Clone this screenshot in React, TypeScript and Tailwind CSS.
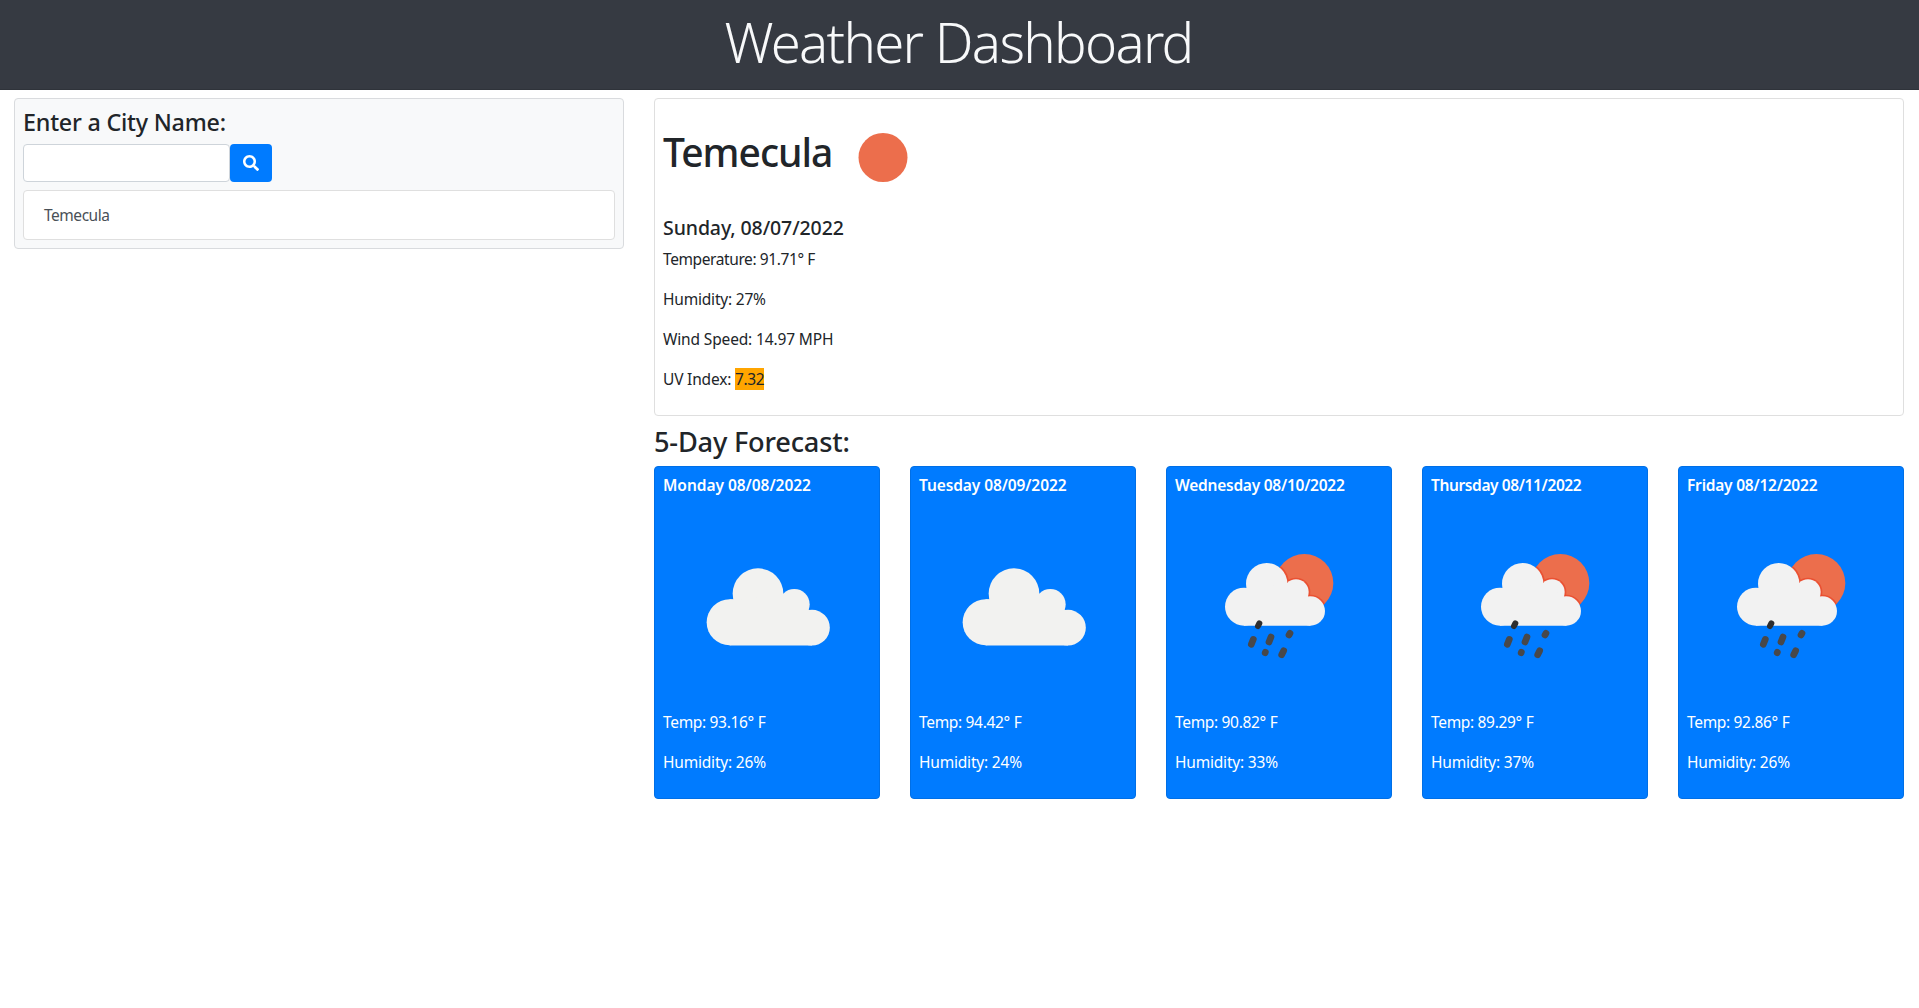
import { FaSearch } from 'react-icons/fa';

function CloudIcon() {
  return (
    <svg viewBox="0 0 208 208" className="block h-[208px] w-full">
      <g transform="translate(-23 -52) scale(0.33333)" fill="#f2f2f0">
        <circle cx="354" cy="431" r="76" />
        <circle cx="269" cy="517" r="69" />
        <circle cx="463" cy="463" r="46" />
        <circle cx="516" cy="533" r="53.5" />
        <path d="M269 448H300L430 432L505 478L516 500V586.5H269Z" />
      </g>
    </svg>
  );
}

function CloudShape() {
  return (
    <>
      <circle cx="335" cy="371" r="62" />
      <circle cx="267" cy="440" r="57" />
      <circle cx="423" cy="396" r="38" />
      <circle cx="466" cy="453" r="44" />
      <path d="M267 385H300L396 372L458 408L466 430V497H267Z" />
    </>
  );
}

function RainIcon({ id }: { id: string }) {
  return (
    <svg viewBox="0 0 208 208" className="block h-[208px] w-full">
      <g transform="translate(-20 -42) scale(0.33333)">
        <clipPath id={id}>
          <circle cx="448" cy="369" r="87" />
        </clipPath>
        <circle cx="448" cy="369" r="87" fill="#ec6e4c" />
        <g clipPath={`url(#${id})`} fill="#ea4a2c" stroke="#ea4a2c" strokeWidth="10" strokeOpacity="0.8">
          <CloudShape />
        </g>
        <g fill="#f2f2f2">
          <CloudShape />
        </g>
        <g stroke="#48484a" strokeWidth="20" strokeLinecap="round">
          <path d="M313 490L309 498" stroke="#2e2e30" strokeWidth="18" />
          <path d="M295 538L289 553" />
          <path d="M348 531L342 546" />
          <path d="M405 520L402 525" />
          <path d="M331 577L330.5 578" />
          <path d="M386 572L380 584" />
        </g>
      </g>
    </svg>
  );
}

const forecast = [
  { day: 'Monday 08/08/2022', tracking: 'tracking-[-0.03px]', temp: '93.16', humidity: 26, rain: false },
  { day: 'Tuesday 08/09/2022', tracking: 'tracking-[-0.1px]', temp: '94.42', humidity: 24, rain: false },
  { day: 'Wednesday 08/10/2022', tracking: 'tracking-[-0.24px]', temp: '90.82', humidity: 33, rain: true },
  { day: 'Thursday 08/11/2022', tracking: 'tracking-[-0.38px]', temp: '89.29', humidity: 37, rain: true },
  { day: 'Friday 08/12/2022', tracking: 'tracking-[-0.22px]', temp: '92.86', humidity: 26, rain: true },
];

export default function App() {
  return (
    <div className="min-h-screen bg-white font-['Noto_Sans','Open_Sans',sans-serif] text-[15.5px] leading-[24px] text-[#212529]">
      <header className="flex h-[90px] justify-center border-b border-[#2f333a] bg-[#363a42] pt-[9px] pr-[2px]">
        <h1 className="text-[54.5px] leading-[67px] font-light tracking-[-1.7px] text-[#f8f9fa]">Weather Dashboard</h1>
      </header>

      <main className="flex items-start gap-[30px] pt-2 pr-[15px] pl-[14px]">
        <aside className="w-[610px] shrink-0 rounded border border-[#d9dbde] bg-[#f8f9fa] p-2">
          <h3 className="mb-[7px] pt-px text-[23.3px] leading-[29px] font-medium tracking-[-0.22px]">Enter a City Name:</h3>
          <form className="flex" onSubmit={(e) => e.preventDefault()}>
            <input className="h-[38px] w-[207px] rounded border border-[#ced4da] bg-white px-3 outline-none" aria-label="City name" />
            <button className="flex h-[38px] w-[42px] items-center justify-center rounded bg-[#007bff] text-base text-white" aria-label="Search">
              <FaSearch />
            </button>
          </form>
          <ul className="mt-2">
            <li className="rounded border border-[#dfdfdf] bg-white px-5 py-3 tracking-[-0.47px] text-[#495057]">Temecula</li>
          </ul>
        </aside>

        <div className="min-w-0 flex-1">
          <section className="h-[318px] rounded border border-[#dfdfdf] bg-white p-2">
            <div className="flex h-[100px]">
              <h2 className="pt-[21px] text-[39px] leading-[48px] font-medium tracking-[-1px]">Temecula</h2>
              <svg viewBox="0 0 100 100" className="ml-px h-[100px] w-[100px]">
                <circle cx="50" cy="50.5" r="24.5" fill="#ec6e4c" />
              </svg>
            </div>
            <h4 className="mt-[9px] mb-[7px] text-[19.5px] leading-[24px] font-medium tracking-[-0.1px]">Sunday, 08/07/2022</h4>
            <p className="mb-4 tracking-[-0.4px]">Temperature: 91.71° F</p>
            <p className="mb-4 tracking-[-0.2px]">Humidity: 27%</p>
            <p className="mb-4 tracking-[-0.15px]">Wind Speed: 14.97 MPH</p>
            <p className="mb-4 tracking-[-0.18px]">
              UV Index: <span className="bg-[#ffa500] tracking-[-0.42px]">7.32</span>
            </p>
          </section>

          <h3 className="mt-[9px] mb-[7px] text-[27.2px] leading-[34px] font-medium tracking-[-0.2px]">5-Day Forecast:</h3>

          <div className="grid grid-cols-5 gap-[30px]">
            {forecast.map((f, i) => (
              <article key={f.day} className="h-[333px] rounded border border-[#006fe6] bg-[#007bff] p-2 text-white">
                <h5 className={`mb-[7px] pt-px leading-[19px] font-semibold ${f.tracking}`}>{f.day}</h5>
                {f.rain ? <RainIcon id={`sun-${i}`} /> : <CloudIcon />}
                <p className="mb-4 tracking-[-0.32px]">Temp: {f.temp}° F</p>
                <p className="tracking-[-0.2px]">Humidity: {f.humidity}%</p>
              </article>
            ))}
          </div>
        </div>
      </main>
    </div>
  );
}
